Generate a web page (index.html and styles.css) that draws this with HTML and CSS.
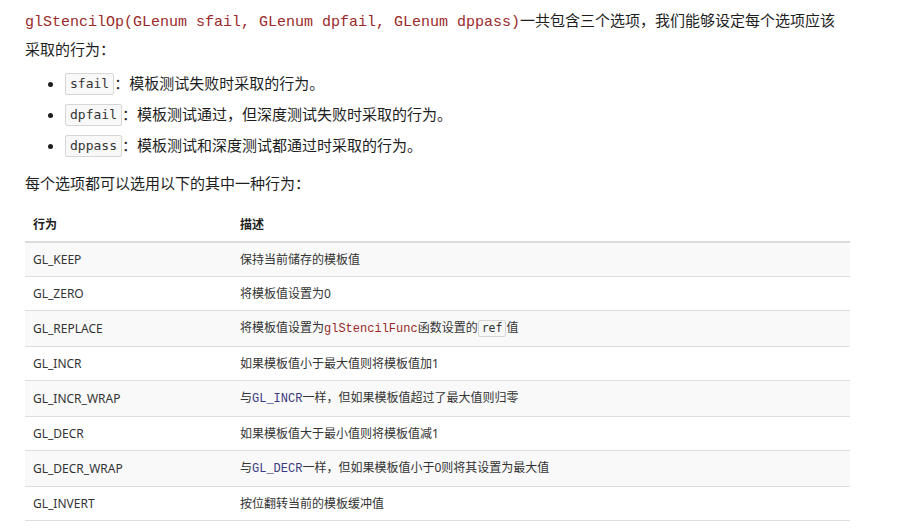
FILE: index.html
```html
<!DOCTYPE html>
<html lang="zh-CN">
<head>
<meta charset="utf-8">
<title>glStencilOp</title>
<link rel="stylesheet" href="styles.css">
</head>
<body>
<main class="article">
  <p class="para intro"><code class="fn">glStencilOp(GLenum sfail, GLenum dpfail, GLenum dppass)</code>一共包含三个选项，我们能够设定每个选项应该采取的行为：</p>
  <ul class="list">
    <li class="item"><code class="box">sfail</code>：模板测试失败时采取的行为。</li>
    <li class="item"><code class="box">dpfail</code>：模板测试通过，但深度测试失败时采取的行为。</li>
    <li class="item"><code class="box">dppass</code>：模板测试和深度测试都通过时采取的行为。</li>
  </ul>
  <p class="para lead">每个选项都可以选用以下的其中一种行为：</p>
  <table class="tbl">
    <thead>
      <tr><th class="c1">行为</th><th>描述</th></tr>
    </thead>
    <tbody>
      <tr><td>GL_KEEP</td><td>保持当前储存的模板值</td></tr>
      <tr><td>GL_ZERO</td><td>将模板值设置为0</td></tr>
      <tr><td>GL_REPLACE</td><td>将模板值设置为<code class="fn-s">glStencilFunc</code>函数设置的<code class="box-s">ref</code>值</td></tr>
      <tr><td>GL_INCR</td><td>如果模板值小于最大值则将模板值加1</td></tr>
      <tr><td>GL_INCR_WRAP</td><td>与<code class="const">GL_INCR</code>一样，但如果模板值超过了最大值则归零</td></tr>
      <tr><td>GL_DECR</td><td>如果模板值大于最小值则将模板值减1</td></tr>
      <tr><td>GL_DECR_WRAP</td><td>与<code class="const">GL_DECR</code>一样，但如果模板值小于0则将其设置为最大值</td></tr>
      <tr><td>GL_INVERT</td><td>按位翻转当前的模板缓冲值</td></tr>
    </tbody>
  </table>
</main>
</body>
</html>
```
FILE: styles.css
```css
html, body {
  margin: 0;
  padding: 0;
  background: #fff;
}
body {
  font-family: "Noto Sans", "Noto Sans CJK SC", sans-serif;
  color: #1e1e1e;
}
.article {
  width: 825px;
  margin-left: 25px;
  padding-top: 7px;
}
.para {
  margin: 0 0 10px 0;
  font-size: 15px;
  line-height: 27px;
}
.intro {
  margin-bottom: 7px;
}
.lead {
  margin-bottom: 12px;
  position: relative;
  top: 1px;
}
.fn {
  font-family: "Liberation Mono", monospace;
  font-size: 15px;
  color: #9b2a2a;
}
.list {
  margin: 0 0 10px 0;
  padding-left: 40px;
  list-style: disc;
}
.item {
  font-size: 15px;
  line-height: 27px;
  margin-bottom: 4px;
}
.box {
  font-family: "DejaVu Sans Mono", monospace;
  font-size: 13px;
  line-height: 18px;
  color: #333;
  background: #f8f8f8;
  border: 1px solid #d6d6d6;
  border-radius: 2px;
  padding: 1px 4px;
  display: inline-block;
  vertical-align: middle;
  position: relative;
  top: -1px;
}
.tbl {
  width: 825px;
  border-collapse: collapse;
  font-size: 12px;
  color: #333;
}
.tbl th {
  text-align: left;
  font-weight: bold;
  padding: 8px;
  height: 17px;
  line-height: 17px;
  border-bottom: 2px solid #dcdcdc;
  color: #222;
}
.tbl th.c1 {
  width: 191px;
}
.tbl td {
  padding: 8px;
  line-height: 17px;
  border-bottom: 1px solid #dedede;
}
.tbl tbody tr:nth-child(odd) {
  background: #f9f9f9;
}
.fn-s {
  font-family: "Liberation Mono", monospace;
  font-size: 12px;
  line-height: 17px;
  color: #9b2a2a;
}
.const {
  font-family: "Liberation Mono", monospace;
  font-size: 12px;
  line-height: 17px;
  color: #3b3b82;
}
.box-s {
  font-family: "DejaVu Sans Mono", monospace;
  font-size: 11.5px;
  line-height: 15px;
  color: #333;
  background: #f8f8f8;
  border: 1px solid #d6d6d6;
  border-radius: 2px;
  padding: 0 3px;
  display: inline-block;
  vertical-align: middle;
}
```
